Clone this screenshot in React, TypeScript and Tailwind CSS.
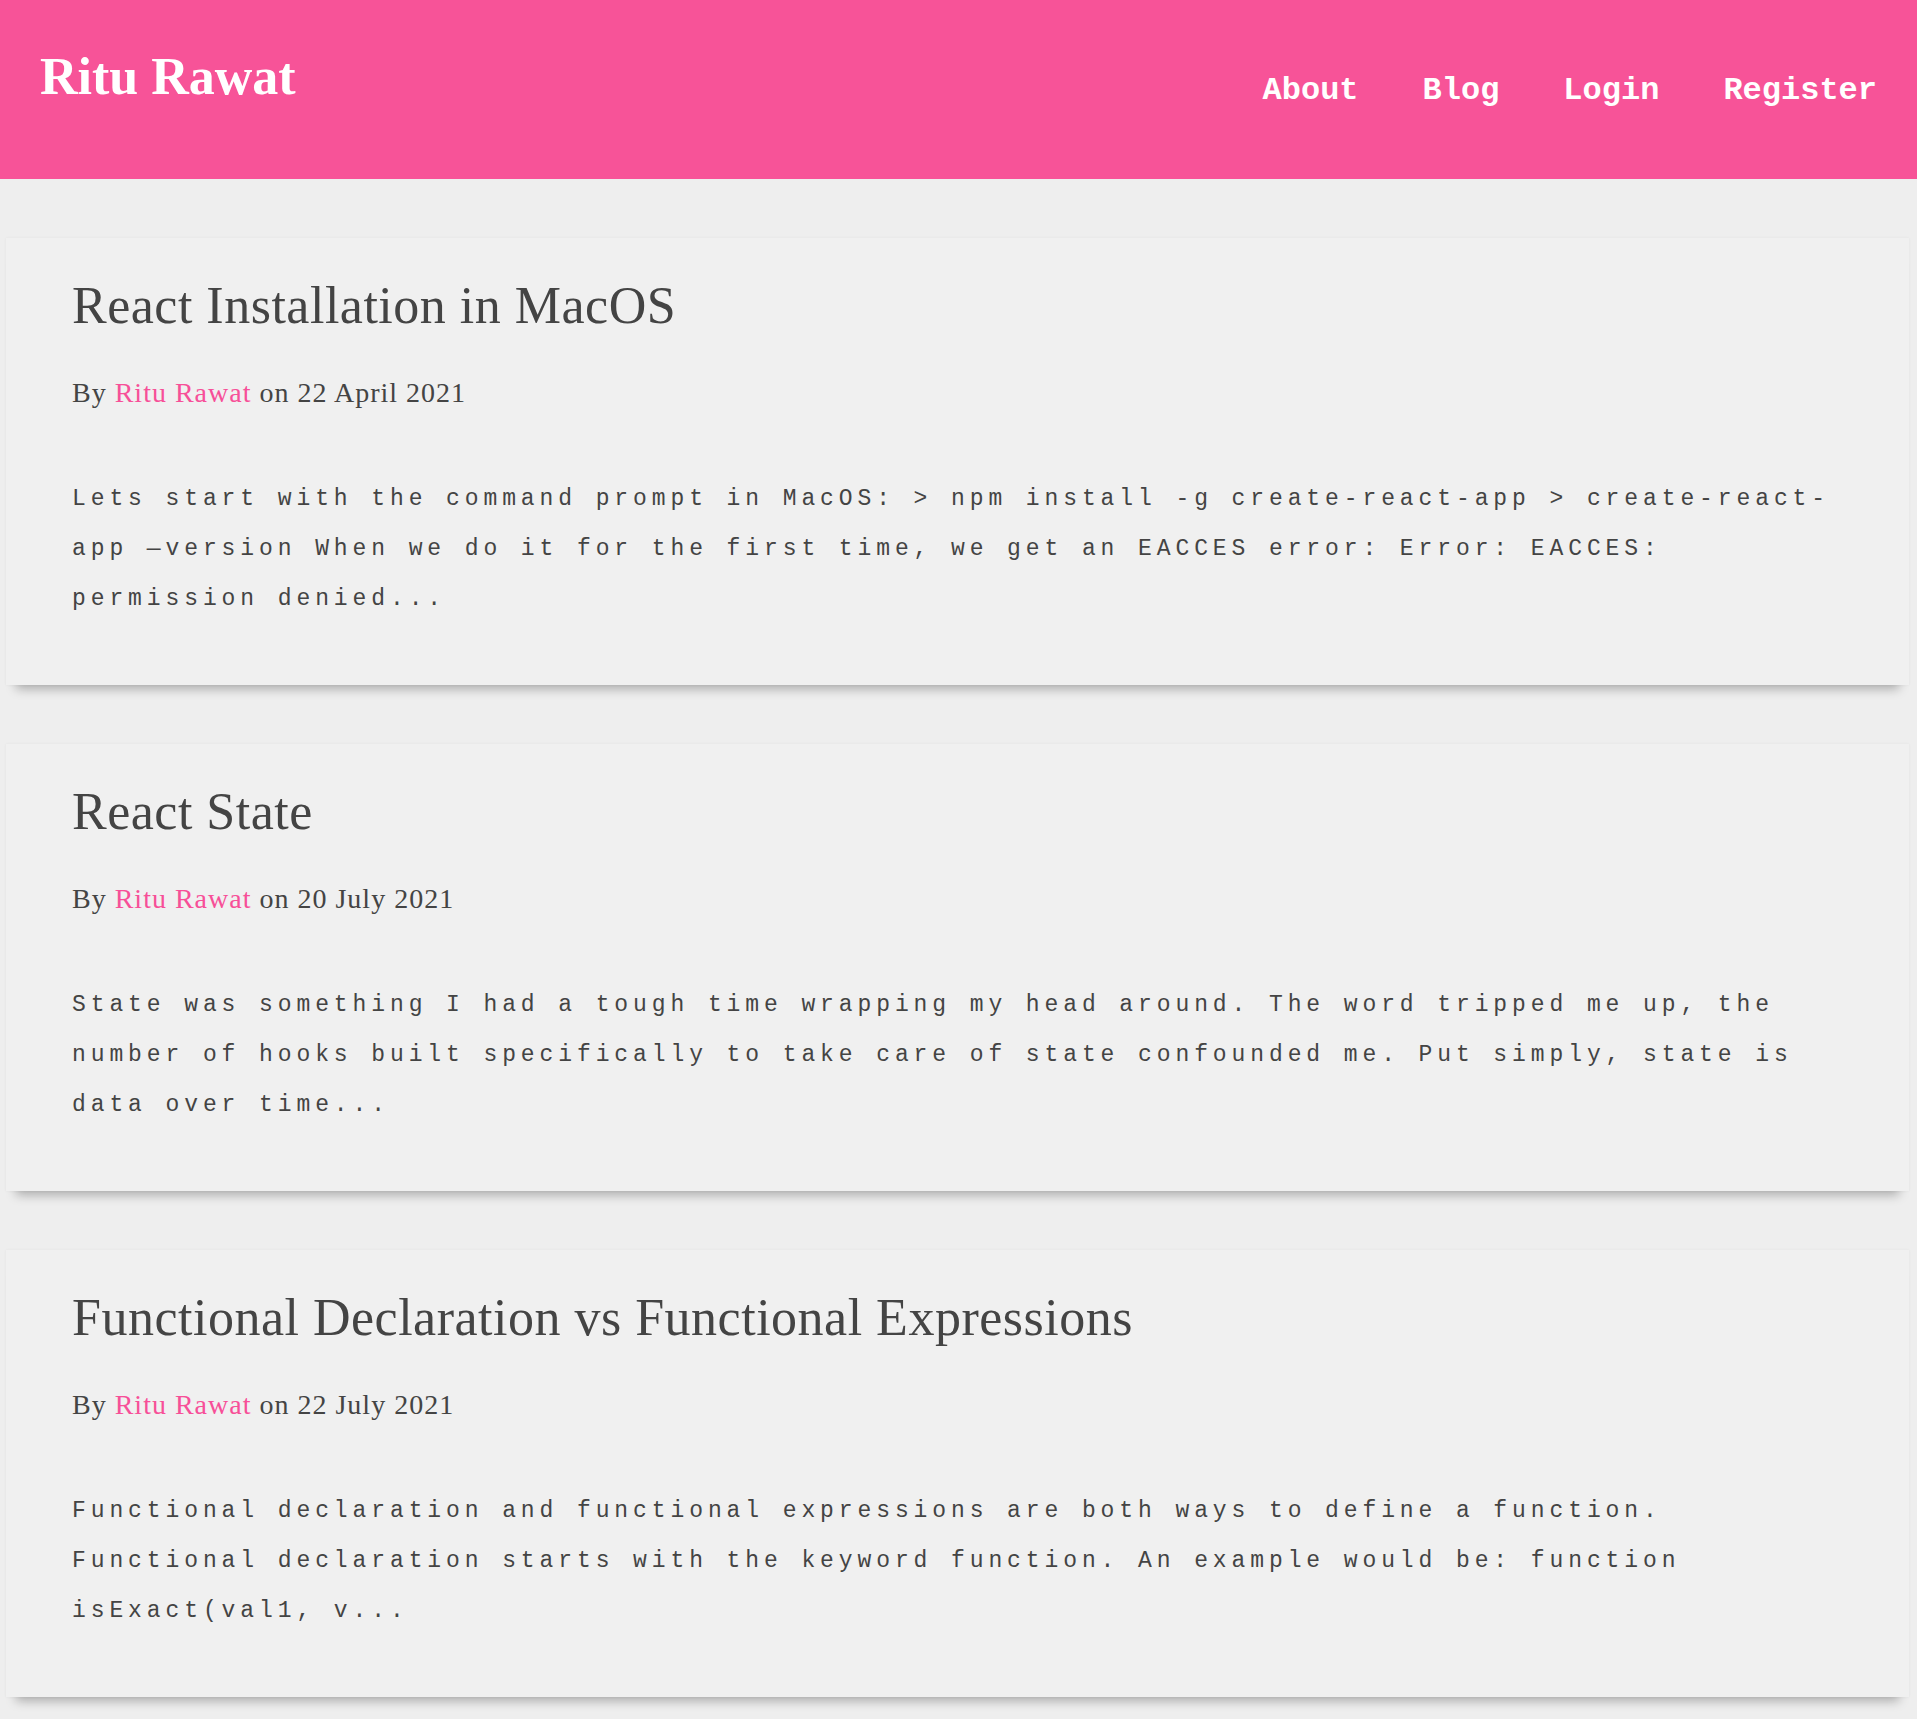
import React from "react";

const posts = [
  {
    title: "React Installation in MacOS",
    date: "22 April 2021",
    excerpt:
      "Lets start with the command prompt in MacOS: > npm install -g create-react-app > create-react-app —version When we do it for the first time, we get an EACCES error: Error: EACCES: permission denied...",
  },
  {
    title: "React State",
    date: "20 July 2021",
    excerpt:
      "State was something I had a tough time wrapping my head around. The word tripped me up, the number of hooks built specifically to take care of state confounded me. Put simply, state is data over time...",
  },
  {
    title: "Functional Declaration vs Functional Expressions",
    date: "22 July 2021",
    excerpt:
      "Functional declaration and functional expressions are both ways to define a function. Functional declaration starts with the keyword function. An example would be: function isExact(val1, v...",
  },
];

export default function App() {
  return (
    <div className="min-h-screen bg-[#eeeeee] pb-[40px]">
      <header className="flex h-[179px] items-start justify-between bg-[#f75398] px-[40px]">
        <h1 className="mt-[51px] font-['Liberation_Serif',serif] text-[52px] font-bold leading-none text-white">
          Ritu Rawat
        </h1>
        <nav className="mt-[75px] flex gap-[64px] font-['Liberation_Mono',monospace] text-[32px] font-bold leading-none text-white">
          <a>About</a>
          <a>Blog</a>
          <a>Login</a>
          <a>Register</a>
        </nav>
      </header>
      <main className="flex flex-col">
        {posts.map((p) => (
          <article
            key={p.title}
            className="ml-[6px] mr-[8px] mt-[59px] bg-[#f0f0f0] pb-[61px] pl-[66px] pr-[66px] pt-[42px] shadow-[0_0_3px_rgba(0,0,0,0.05),0_14px_10px_-10px_rgba(0,0,0,0.28)]"
          >
            <h2 className="font-['Liberation_Serif',serif] text-[52px] leading-none tracking-[0.5px] text-[#444444]">
              {p.title}
            </h2>
            <p className="mt-[47px] font-['Liberation_Serif',serif] text-[28px] leading-none tracking-[1px] text-[#444444]">
              By <span className="text-[#f74f98]">Ritu Rawat</span> on {p.date}
            </p>
            <p className="mt-[67px] font-['Liberation_Mono',monospace] text-[23px] leading-[50px] tracking-[4.9px] text-[#444444]">
              {p.excerpt}
            </p>
          </article>
        ))}
      </main>
    </div>
  );
}
